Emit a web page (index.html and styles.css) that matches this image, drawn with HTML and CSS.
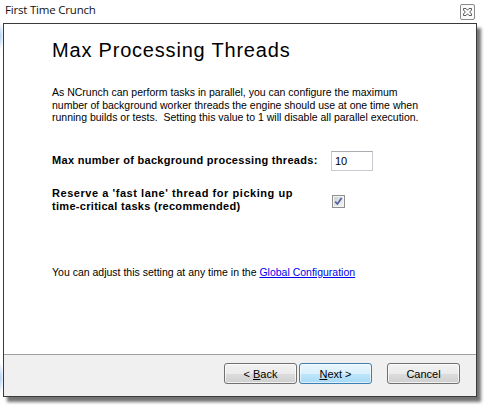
FILE: index.html
```html
<!DOCTYPE html>
<html>
<head>
<meta charset="utf-8">
<link rel="stylesheet" href="styles.css">
</head>
<body>
<div class="screen">
  <div class="titlebar">
    <span class="title">First Time Crunch</span>
    <span class="close">
      <svg width="9" height="8" viewBox="0 0 9 8"><path d="M0.5 0.5h2.5l1.5 1.7l1.5-1.7h2.5v1.5l-1.8 2l1.8 2v1.5h-2.5l-1.5-1.7l-1.5 1.7h-2.5v-1.5l1.8-2l-1.8-2z" fill="none" stroke="#5a5a5a" stroke-width="1"/></svg>
    </span>
  </div>
  <div class="window">
    <div class="content">
      <h1 class="heading">Max Processing Threads</h1>
      <p class="intro">As NCrunch can perform tasks in parallel, you can configure the maximum<br>number of background worker threads the engine should use at one time when<br>running builds or tests.&nbsp; Setting this value to 1 will disable all parallel execution.</p>
      <div class="form">
        <label class="field-label">Max number of background processing threads:</label>
        <div class="textbox">10</div>
        <label class="field-label"><span class="wide">Reserve a 'fast lane' thread for picking up</span><br>time-critical tasks (recommended)</label>
        <div class="checkbox">
          <svg width="13" height="13" viewBox="0 0 13 13">
            <defs>
              <linearGradient id="cbg" x1="0" y1="0" x2="1" y2="1">
                <stop offset="0" stop-color="#cfd2d6"/>
                <stop offset="1" stop-color="#f3f4f5"/>
              </linearGradient>
            </defs>
            <rect x="0.5" y="0.5" width="12" height="12" fill="#f5f5f5" stroke="#8e8f8f"/>
            <rect x="2" y="2" width="9" height="9" fill="url(#cbg)"/>
            <path d="M3.2 6.6l2.2 2.4l4.2-6" fill="none" stroke="#4d62a0" stroke-width="1.7"/>
          </svg>
        </div>
      </div>
      <p class="footer-note">You can adjust this setting at any time in the <a class="link" href="#">Global Configuration</a></p>
    </div>
    <div class="buttons">
      <button class="btn"><span>&lt; <u>B</u>ack</span></button>
      <button class="btn btn-default"><span><u>N</u>ext &gt;</span></button>
      <button class="btn btn-cancel"><span>Cancel</span></button>
    </div>
  </div>
</div>
</body>
</html>
```

FILE: styles.css
```css
html, body {
  margin: 0;
  padding: 0;
  background: #ffffff;
}
.screen {
  width: 485px;
  height: 405px;
  position: relative;
  overflow: hidden;
  background:
    radial-gradient(ellipse 4px 14px at 0 36px, rgba(140, 190, 235, 0.7), rgba(140, 190, 235, 0)),
    radial-gradient(ellipse 4px 16px at 0 378px, rgba(140, 190, 235, 0.7), rgba(140, 190, 235, 0)),
    #ffffff;
  font-family: "Liberation Sans", Arial, sans-serif;
}
.titlebar {
  height: 23px;
  display: flex;
  align-items: flex-start;
  justify-content: space-between;
  padding: 0 10px 0 5px;
  box-sizing: border-box;
}
.title {
  font-family: "Open Sans", "Noto Sans", sans-serif;
  font-size: 11.5px;
  color: #111;
  margin-top: 2px;
  letter-spacing: -0.2px;
  text-shadow: 0 0 6px #fff;
}
.close {
  margin-top: 4px;
  width: 15px;
  height: 16px;
  box-sizing: border-box;
  border: 1px solid #8a8a8a;
  border-radius: 2px;
  background: #fafafa;
  display: flex;
  align-items: center;
  justify-content: center;
}
.window {
  margin-left: 3px;
  width: 474px;
  height: 374px;
  box-sizing: border-box;
  border: 1px solid #3a3a3a;
  display: flex;
  flex-direction: column;
  box-shadow: 4px 5px 3px rgba(0, 0, 0, 0.55);
}
.content {
  height: 331px;
  background: #fff;
  padding: 15px 0 0 48px;
  box-sizing: border-box;
  border-bottom: 1px solid #a0a0a0;
  font-size: 10.5px;
  color: #000;
}
.heading {
  margin: 0;
  font-weight: normal;
  font-size: 20px;
  line-height: 23px;
  letter-spacing: 0.8px;
}
.intro {
  margin: 24px 0 0 0;
  line-height: 12.5px;
  white-space: nowrap;
}
.form {
  margin-top: 27px;
  display: grid;
  grid-template-columns: 279px auto;
  row-gap: 16px;
  align-items: center;
}
.field-label {
  font-weight: bold;
  font-size: 11px;
  letter-spacing: 0.3px;
  line-height: 13px;
}
.wide {
  letter-spacing: 0.55px;
}
.textbox {
  width: 42px;
  height: 20px;
  box-sizing: border-box;
  border: 1px solid #c6cbd2;
  border-top-color: #abadb3;
  padding: 3px 0 0 3px;
  line-height: 13px;
  font-size: 11px;
}
.checkbox {
  height: 13px;
  margin: 3px 0 0 1px;
}
.checkbox svg {
  display: block;
}
.footer-note {
  margin: 53px 0 0 0;
  line-height: 13px;
}
.link {
  color: #0000ee;
  text-decoration: underline;
}
.buttons {
  flex: 1;
  background: #f0f0f0;
  display: flex;
  justify-content: flex-end;
  align-items: flex-start;
  padding: 8px 16px 0 0;
  box-sizing: border-box;
}
.btn {
  width: 73px;
  height: 21px;
  box-sizing: border-box;
  margin: 0;
  padding: 0;
  border: 1px solid #707070;
  border-radius: 3px;
  background: linear-gradient(#f2f2f2 0%, #ebebeb 50%, #dddddd 51%, #cfcfcf 100%);
  font-family: "Liberation Sans", Arial, sans-serif;
  font-size: 11px;
  color: #000;
  box-shadow: inset 0 0 0 1px rgba(255, 255, 255, 0.7);
}
.btn u {
  text-decoration: underline;
}
.btn-default {
  margin-left: 2px;
  border-color: #3c7fb1;
  background: linear-gradient(#eaf6fd 0%, #d9f0fc 50%, #bee6fd 51%, #a7d9f5 100%);
  box-shadow: inset 0 0 0 1px rgba(255, 255, 255, 0.6);
}
.btn-cancel {
  margin-left: 15px;
}
```
